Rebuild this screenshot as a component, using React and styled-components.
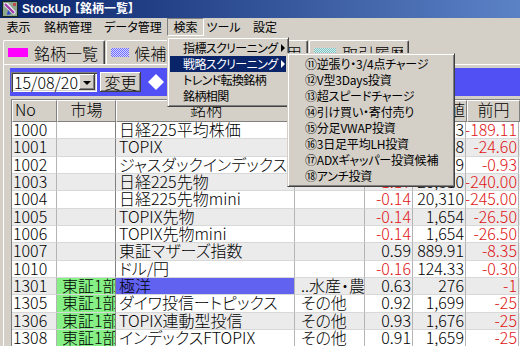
import React from 'react';
import styled, { createGlobalStyle } from 'styled-components';

const GlobalStyle = createGlobalStyle`
  html, body {
    margin: 0;
    padding: 0;
    background: #d4d0c8;
    overflow: hidden;
  }
`;

const columns = [
  { key: 'no', label: 'No', width: 45, align: 'left' },
  { key: 'market', label: '市場', width: 59, align: 'center' },
  { key: 'name', label: '銘柄', width: 180, align: 'center' },
  { key: 'kind', label: '業種', width: 70, align: 'center' },
  { key: 'rate', label: '騰落率', width: 48, align: 'center' },
  { key: 'price', label: '現在値', width: 53, align: 'center' },
  { key: 'prev', label: '前円', width: 53, align: 'center' },
];

const rows = [
  ['1000', '', '日経225平均株価', '', '-0.91', '19,986.23', '-189.11'],
  ['1001', '', 'TOPIX', '', '-1.46', '1,662.48', '-24.60'],
  ['1002', '', 'ジャスダックインデックス', '', '-0.36', '95.39', '-0.93'],
  ['1003', '', '日経225先物', '', '-1.17', '20,310', '-240.00'],
  ['1004', '', '日経225先物mini', '', '-0.14', '20,310', '-245.00'],
  ['1005', '', 'TOPIX先物', '', '-0.14', '1,654', '-26.50'],
  ['1006', '', 'TOPIX先物mini', '', '-0.14', '1,654', '-26.50'],
  ['1007', '', '東証マザーズ指数', '', '0.59', '889.91', '-8.35'],
  ['1010', '', 'ドル/円', '', '-0.16', '124.33', '-0.30'],
  ['1301', '東証1部', '極洋', '..水産・農林業', '0.63', '276', '-1'],
  ['1305', '東証1部', 'ダイワ投信ートピックス', 'その他', '0.92', '1,699', '-25'],
  ['1306', '東証1部', 'TOPIX連動型投信', 'その他', '0.93', '1,676', '-25'],
  ['1308', '東証1部', 'インデックスFTOPIX', 'その他', '0.91', '1,659', '-25'],
  ['1309', '東証1部', '上海株式指数上場投信', 'その他', '0.00', '2,260', '0'],
];

const menus = [
  { label: '表示', width: 37 },
  { label: '銘柄管理', width: 62 },
  { label: 'データ管理', width: 68 },
  { label: '検索', width: 37, open: true },
  { label: 'ツール', width: 39 },
  { label: '設定', width: 44 },
];

const searchItems = [
  { label: '指標スクリーニング', sub: true },
  { label: '戦略スクリーニング', sub: true, active: true },
  { label: 'トレンド転換銘柄' },
  { label: '銘柄相関' },
];

const strategyItems = [
  '⑪逆張り・3/4点チャージ',
  '⑫V型3Days投資',
  '⑬超スピードチャージ',
  '⑭引け買い・寄付売り',
  '⑮分足VWAP投資',
  '⑯3日足平均LH投資',
  '⑰ADXギャッパー投資候補',
  '⑱アンチ投資',
];

const AppIcon = () => (
  <svg width="16" height="16" viewBox="0 0 16 16">
    <rect x="0.5" y="0.5" width="15" height="15" fill="#90a890" stroke="#1c2c1c" />
    <path d="M2 2 L6 2 L14 11 L12 14 L2 5 Z" fill="#ece6f2" />
    <path d="M3 3 L12 12" stroke="#a03ca8" strokeWidth="2.2" />
    <path d="M6 9 L9 13 L5 14 Z" fill="#2a48d0" />
    <rect x="11" y="2" width="3" height="3" fill="#c05050" />
  </svg>
);

const Diamond = () => (
  <svg width="16" height="16" viewBox="0 0 16 16">
    <polygon points="8,0 16,8 8,16 0,8" fill="#fff" />
  </svg>
);

const App = () => {
  return (
    <>
      <GlobalStyle />
      <Window>
        <TitleBar>
          <AppIcon />
          <TitleText>StockUp 【銘柄一覧】</TitleText>
        </TitleBar>

        <MenuBar>
          {menus.map((m) => (
            <MenuItem key={m.label} w={m.width} open={m.open}>
              {m.label}
              {m.open && (
                <Dropdown>
                  {searchItems.map((it) => (
                    <DropItem key={it.label} active={it.active}>
                      {it.label}
                      {it.sub && <Arrow active={it.active} />}
                      {it.active && (
                        <SubMenu>
                          {strategyItems.map((s) => (
                            <SubItem key={s}>{s}</SubItem>
                          ))}
                        </SubMenu>
                      )}
                    </DropItem>
                  ))}
                </Dropdown>
              )}
            </MenuItem>
          ))}
        </MenuBar>

        <TabStrip>
          <Tab w={102}>
            <Swatch w={20} c1="#ff00ff" />
            <TabLabel>銘柄一覧</TabLabel>
          </Tab>
          <Tab w={202}>
            <Swatch w={18} c1="#6a6aff" c2="#d8d8ff" hatch />
            <TabLabel end>候補銘柄（監視リスト）用</TabLabel>
          </Tab>
          <Tab w={100}>
            <Swatch w={22} c1="#7cc4c4" c2="#d4ecec" hatch />
            <TabLabel>取引履歴</TabLabel>
          </Tab>
        </TabStrip>

        <Panel>
          <Toolbar>
            <Combo>
              <ComboText>15/08/20</ComboText>
              <ComboButton>
                <DownTri />
              </ComboButton>
            </Combo>
            <PushButton>変更</PushButton>
            <Diamond />
          </Toolbar>

          <Table>
            <Row header>
              {columns.map((c) => (
                <HeadCell key={c.key} w={c.width} align={c.align}>
                  {c.label}
                </HeadCell>
              ))}
            </Row>
            {rows.map((r, i) => (
              <Row key={r[0]} alt={i % 2 === 1}>
                <Cell w={45}>{r[0]}</Cell>
                <Cell w={59} pad={5} bg={r[1] ? '#86f086' : null}>
                  {r[1]}
                </Cell>
                <Cell w={180} pad={3} bg={r[0] === '1301' ? '#6262f0' : null} dark>
                  {r[2]}
                </Cell>
                <Cell w={70} pad={6}>
                  {r[3]}
                </Cell>
                <NumCell w={48} neg={r[4].startsWith('-')}>
                  {r[4]}
                </NumCell>
                <NumCell w={53}>{r[5]}</NumCell>
                <NumCell w={53} neg={r[6].startsWith('-')}>
                  {r[6]}
                </NumCell>
              </Row>
            ))}
          </Table>
        </Panel>
      </Window>
    </>
  );
};

const Window = styled.div`
  width: 520px;
  height: 346px;
  overflow: hidden;
  display: flex;
  flex-direction: column;
  background: #d4d0c8;
  color: #000;
  font-family: 'Noto Sans CJK JP', sans-serif;
  font-feature-settings: 'palt';
`;

const TitleBar = styled.div`
  flex: none;
  height: 18px;
  display: flex;
  align-items: center;
  gap: 4px;
  padding-left: 2px;
  background: linear-gradient(90deg, #0a246a 0%, #5c82c6 100%);
  color: #fff;
`;

const TitleText = styled.span`
  font-family: 'Liberation Sans', 'Noto Sans CJK JP', sans-serif;
  font-weight: bold;
  font-size: 12px;
  line-height: 16px;
  white-space: pre;
`;

const MenuBar = styled.div`
  flex: none;
  height: 19px;
  display: flex;
  position: relative;
  z-index: 5;
`;

const MenuItem = styled.div`
  position: relative;
  box-sizing: border-box;
  width: ${(p) => p.w}px;
  height: 18px;
  display: flex;
  align-items: center;
  justify-content: center;
  font-size: 12px;
  line-height: 16px;
  white-space: nowrap;
  border: 1px solid;
  border-color: ${(p) => (p.open ? '#808080 #fff #fff #808080' : 'transparent')};
`;

const Dropdown = styled.div`
  position: absolute;
  top: 18px;
  left: -1px;
  width: 122px;
  box-sizing: border-box;
  padding: 2px;
  background: #d4d0c8;
  border: 1px solid;
  border-color: #d4d0c8 #404040 #404040 #d4d0c8;
  box-shadow: inset 1px 1px #fff, inset -1px -1px #808080;
`;

const DropItem = styled.div`
  position: relative;
  height: 16px;
  line-height: 16px;
  padding-left: 13px;
  font-size: 12px;
  letter-spacing: -0.6px;
  white-space: nowrap;
  background: ${(p) => (p.active ? '#0a246a' : 'transparent')};
  color: ${(p) => (p.active ? '#fff' : '#000')};
`;

const Arrow = styled.span`
  position: absolute;
  right: 1px;
  top: 4px;
  width: 0;
  height: 0;
  border-top: 4px solid transparent;
  border-bottom: 4px solid transparent;
  border-left: 4px solid ${(p) => (p.active ? '#fff' : '#000')};
`;

const SubMenu = styled(Dropdown)`
  top: -3px;
  left: calc(100% + 1px);
  width: 168px;
  letter-spacing: -0.2px;
`;

const SubItem = styled.div`
  height: 16px;
  line-height: 16px;
  padding-left: 15px;
  font-size: 12px;
  white-space: nowrap;
  color: #000;
`;

const TabStrip = styled.div`
  flex: none;
  height: 27px;
  display: flex;
  align-items: flex-end;
  gap: 1px;
  padding-left: 3px;
`;

const Tab = styled.div`
  box-sizing: border-box;
  width: ${(p) => p.w}px;
  height: 24px;
  display: flex;
  align-items: center;
  gap: 6px;
  padding: 0 5px 0 4px;
  border-top: 1px solid #fff;
  border-left: 1px solid #fff;
  border-right: 1px solid #404040;
  box-shadow: inset -1px 0 #808080;
  border-radius: 2px 2px 0 0;
  font-size: 16px;
  line-height: 18px;
  font-weight: 300;
  white-space: nowrap;
  overflow: hidden;
`;

const TabLabel = styled.span`
  flex: 1;
  min-width: 0;
  display: flex;
  justify-content: ${(p) => (p.end ? 'flex-end' : 'flex-start')};
  overflow: hidden;
`;

const Swatch = styled.span`
  flex: none;
  width: ${(p) => p.w}px;
  height: 9px;
  background: ${(p) =>
    p.hatch
      ? `repeating-conic-gradient(${p.c1} 0 25%, ${p.c2} 0 50%) 0 0 / 2px 2px`
      : p.c1};
`;

const Panel = styled.div`
  flex: 1;
  min-height: 0;
  display: flex;
  flex-direction: column;
  margin-left: 3px;
  padding: 3px 0 0 6px;
  border-top: 1px solid #fff;
  border-left: 1px solid #fff;
`;

const Toolbar = styled.div`
  flex: none;
  height: 28px;
  display: flex;
  align-items: center;
  gap: 3px;
  padding-left: 1px;
  background: #5050f4;
  & > svg {
    margin-left: 4px;
  }
`;

const Combo = styled.div`
  box-sizing: border-box;
  width: 86px;
  height: 20px;
  display: flex;
  align-items: center;
  padding: 2px;
  background: #fff;
  box-shadow: inset 1px 1px #808080, inset 2px 2px #404040, inset -1px -1px #fff,
    inset -2px -2px #d4d0c8;
`;

const ComboText = styled.span`
  flex: 1;
  padding-left: 1px;
  font-size: 16px;
  line-height: 16px;
  font-weight: 300;
`;

const ComboButton = styled.span`
  box-sizing: border-box;
  width: 16px;
  height: 16px;
  display: flex;
  align-items: center;
  justify-content: center;
  background: #d4d0c8;
  box-shadow: inset -1px -1px #404040, inset 1px 1px #fff, inset -2px -2px #808080;
`;

const DownTri = styled.span`
  width: 0;
  height: 0;
  border-left: 4px solid transparent;
  border-right: 4px solid transparent;
  border-top: 4px solid #000;
  margin-top: 1px;
`;

const PushButton = styled.span`
  box-sizing: border-box;
  width: 41px;
  height: 20px;
  display: flex;
  align-items: center;
  justify-content: center;
  background: #d4d0c8;
  font-size: 16px;
  line-height: 16px;
  font-weight: 300;
  box-shadow: inset -1px -1px #404040, inset 1px 1px #fff, inset -2px -2px #808080;
`;

const Table = styled.div`
  flex: 1;
  min-height: 0;
  margin: 3px 0 0 1px;
  border-left: 1px solid #808080;
  border-top: 1px solid #808080;
  background: #fff;
  overflow: hidden;
`;

const Row = styled.div`
  display: flex;
  height: ${(p) => (p.header ? '22px' : 'calc(52px / 3)')};
  background: ${(p) => (p.header ? '#d4d0c8' : p.alt ? '#ebebeb' : '#fff')};
`;

const HeadCell = styled.div`
  box-sizing: border-box;
  flex: none;
  width: ${(p) => p.w}px;
  padding: 0 2px;
  text-align: ${(p) => p.align};
  font-size: 16px;
  line-height: 16px;
  font-weight: 300;
  white-space: nowrap;
  overflow: hidden;
  border-top: 1px solid #fff;
  border-left: 1px solid #fff;
  border-right: 1px solid #808080;
  border-bottom: 1px solid #808080;
`;

const Cell = styled.div`
  box-sizing: border-box;
  flex: none;
  width: ${(p) => p.w}px;
  padding-left: ${(p) => p.pad || 1}px;
  font-size: 16px;
  line-height: 15px;
  font-weight: 300;
  white-space: nowrap;
  overflow: hidden;
  background: ${(p) => p.bg || 'transparent'};
  border-right: 1px solid #b4b4b4;
  border-bottom: 1px solid #d8d8d8;
  border-left: ${(p) => (p.dark ? '1px solid #808080' : '0')};
  margin-left: ${(p) => (p.dark ? '-1px' : '0')};
`;

const NumCell = styled(Cell)`
  display: flex;
  justify-content: flex-end;
  padding: 0 1px 0 0;
  color: ${(p) => (p.neg ? '#e01414' : '#000')};
`;

export default App;
